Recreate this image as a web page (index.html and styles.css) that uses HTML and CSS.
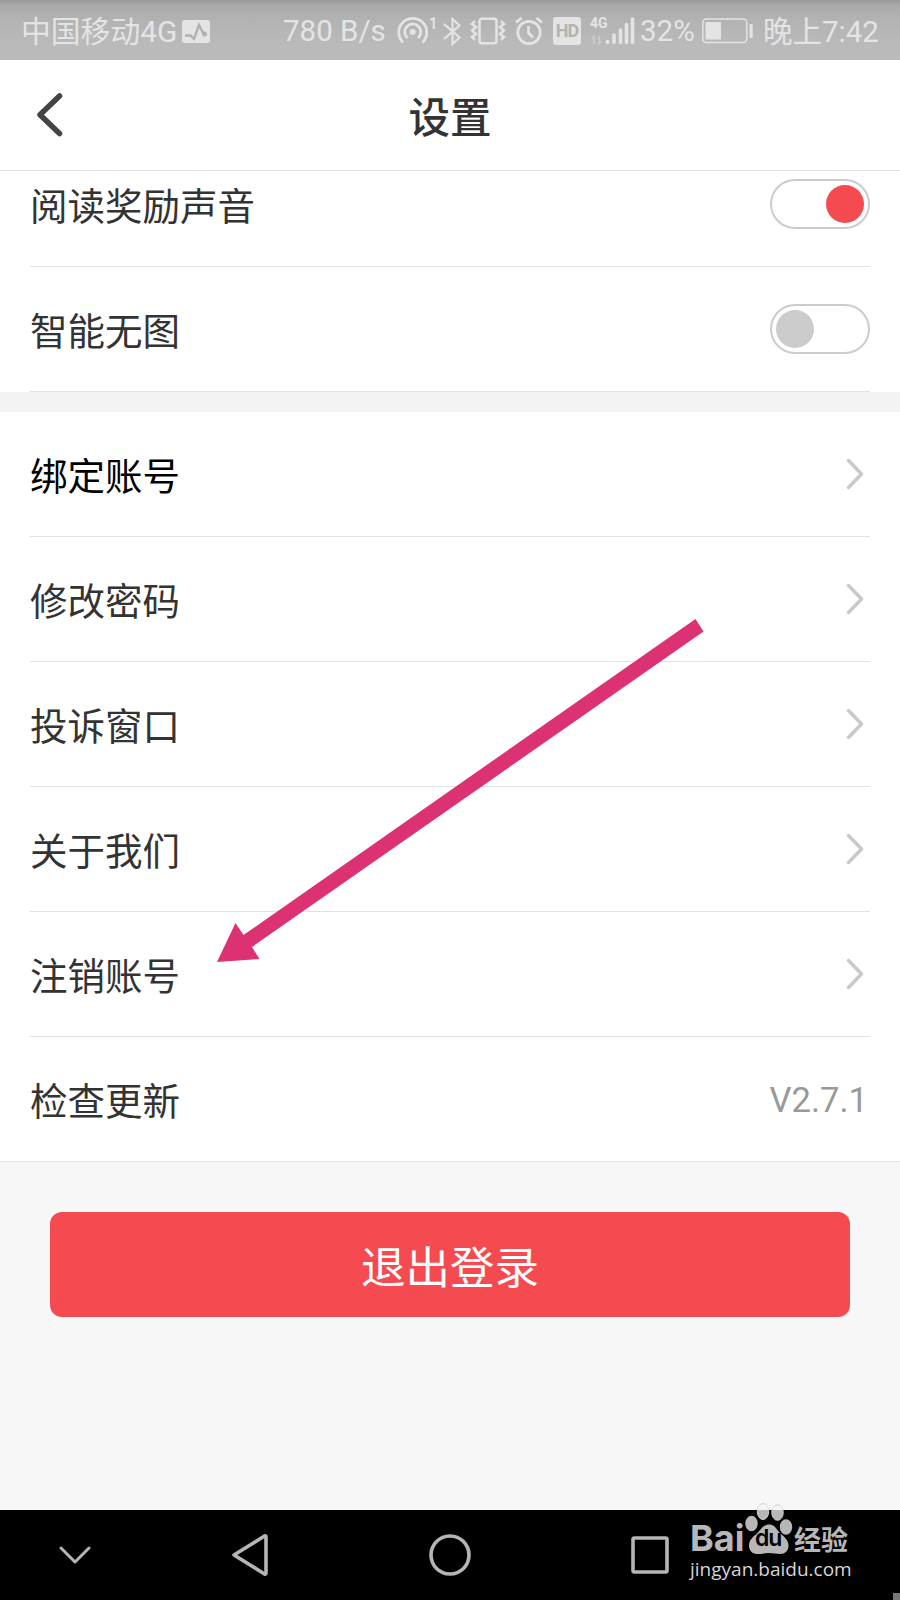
FILE: index.html
```
<!DOCTYPE html>
<html lang="zh-CN">
<head>
  <meta charset="UTF-8" />
  <meta name="viewport" content="width=device-width, initial-scale=1.0"/>
  <title>设置</title>
  <link rel="stylesheet" href="styles.css">
</head>
<body>

  <!-- Status bar -->
  <div class="status-bar">
    <div class="status-left">
      <span class="carrier">中国移动4G</span>
      <svg width="28" height="23" viewBox="0 0 28 23">
        <rect width="28" height="23" rx="3" fill="#e4e4e4"/>
        <path d="M3 15.500h5.500l3.500 3.500 5-14 4.500 9" fill="none" stroke="#b0b0b0" stroke-width="2.300"/>
        <circle cx="22.500" cy="14" r="2.500" fill="#b0b0b0"/>
      </svg>
    </div>
    <div class="status-right">
      <span class="speed">780 B/s</span>
      <svg class="hotspot" width="39" height="28" viewBox="0 0 39 28">
        <g fill="none" stroke="#e4e4e4" stroke-width="2.800">
          <path d="M6 25.500a14 14 0 1 1 19.500 0"/>
          <path d="M10.500 21a8 8 0 1 1 10.500 0"/>
        </g>
        <circle cx="15.700" cy="15" r="3" fill="#e4e4e4"/>
        <path d="M33.500 2.800 36.800 1.500V12" fill="none" stroke="#e4e4e4" stroke-width="2"/>
      </svg>
      <svg class="bluetooth" width="18" height="29" viewBox="0 0 18 29">
        <path d="M1 7 16.500 20.500 9.500 27V2l7 6.500L1 22" fill="none" stroke="#e4e4e4" stroke-width="2.200"/>
      </svg>
      <svg class="vibrate" width="36" height="28" viewBox="0 0 36 28">
        <g fill="none" stroke="#e4e4e4" stroke-width="2.500">
          <rect x="9.500" y="1.700" width="17" height="24.600" rx="2.500"/>
          <path d="m5 4-3 3 4 3-4 3.500 4 3.500-4 3 3 3"/>
          <path d="m31 4 3 3-4 3 4 3.500-4 3.500 4 3-3 3"/>
        </g>
      </svg>
      <svg class="alarm" width="28" height="28" viewBox="0 0 28 28">
        <g fill="none" stroke="#e4e4e4" stroke-width="2.800">
          <circle cx="14" cy="15.500" r="11.200"/>
          <path d="M13.500 9v7l4.500 4.500M1 5.500l5.500-4.500M27 5.500l-5.500-4.500"/>
        </g>
      </svg>
      <span class="hd">HD</span>
      <span class="network">4G</span>
      <svg class="signal" width="46" height="28" viewBox="0 0 46 28">
        <path d="M4 27v-8l-2 3M9 19v8l2-3" fill="none" stroke="#c9c9c9" stroke-width="2"/>
        <path d="M17.500 24.500v1M24 18v7.500M30.500 13v12.500M36.500 7.500v18M42.500 2v23.500" fill="none" stroke="#e4e4e4" stroke-width="3.600" stroke-linecap="round"/>
      </svg>
      <span class="percent">32%</span>
      <svg class="battery" width="51" height="26" viewBox="0 0 51 26">
        <rect x=".8" y="1" width="44" height="23.500" rx="3.500" fill="none" stroke="#e4e4e4" stroke-width="1.500"/>
        <path d="M3.500 4h15.500v17.500h-15.500z" fill="#e4e4e4"/>
        <rect x="47.500" y="6" width="3.200" height="14" rx="1" fill="#e4e4e4"/>
      </svg>
      <span class="clock">晚上7:42</span>
    </div>
  </div>

  <header>
    <svg class="back" width="26" height="44" viewBox="0 0 26 44">
      <path d="M22.500 3 3 21.700 22.500 40.500" fill="none" stroke="#444" stroke-width="5.500" stroke-linecap="round" stroke-linejoin="round"/>
    </svg>
    <h1>设置</h1>
  </header>

  <main>
    <section class="list switches">
      <div class="row"><span class="label">阅读奖励声音</span><i class="switch on"></i></div>
      <div class="row"><span class="label">智能无图</span><i class="switch"></i></div>
    </section>

    <section class="list account">
      <div class="row dark"><span class="label">绑定账号</span><svg class="chevron" viewBox="0 0 18 32"><path d="m2.500 2.500 13 13.500-13 13.500"/></svg></div>
      <div class="row"><span class="label">修改密码</span><svg class="chevron" viewBox="0 0 18 32"><path d="m2.500 2.500 13 13.500-13 13.500"/></svg></div>
      <div class="row"><span class="label">投诉窗口</span><svg class="chevron" viewBox="0 0 18 32"><path d="m2.500 2.500 13 13.500-13 13.500"/></svg></div>
      <div class="row"><span class="label">关于我们</span><svg class="chevron" viewBox="0 0 18 32"><path d="m2.500 2.500 13 13.500-13 13.500"/></svg></div>
      <div class="row"><span class="label">注销账号</span><svg class="chevron" viewBox="0 0 18 32"><path d="m2.500 2.500 13 13.500-13 13.500"/></svg></div>
      <div class="row"><span class="label">检查更新</span><span class="version">V2.7.1</span></div>
    </section>

    <button class="logout">退出登录</button>
  </main>

  <!-- System navigation -->
  <nav>
    <svg class="nav-down" width="32" height="18" viewBox="0 0 32 18"><path d="m2 2 14 14L30 2"/></svg>
    <svg class="nav-back" width="36" height="42" viewBox="0 0 36 42"><path d="M32.500 2 2 21l30.500 19q1.500.5 1.500-1V3q0-1.500-1.500-1z"/></svg>
    <svg class="nav-home" width="42" height="42" viewBox="0 0 42 42"><circle cx="21" cy="21" r="19"/></svg>
    <svg class="nav-recent" width="38" height="38" viewBox="0 0 38 38"><rect x="2" y="2" width="34" height="34" rx="1.500"/></svg>
    <div class="watermark">
      <div class="brand">
        <span class="bai">Bai</span>
        <span class="paw">
          <svg width="48" height="52" viewBox="0 0 48 52" fill="#b7b7b7">
            <ellipse cx="6.500" cy="20.500" rx="6.200" ry="7.800"/>
            <g stroke="#d4d4d4">
              <ellipse cx="18" cy="8.500" rx="5.700" ry="8"/>
              <ellipse cx="32.500" cy="9.500" rx="5.700" ry="7.800"/>
            </g>
            <path d="M12.800 7a5.200 6 0 0 1 10.400 0zM27.500 7a5 4.800 0 0 1 10 0z" fill="#f6f6f6"/>
            <ellipse cx="41" cy="24" rx="6.200" ry="7.800"/>
            <path d="M24 21.500c-6 0-8 5-12 9-5 4-8 7-8 12 0 6 4 8.500 9 8.500 4 0 7-1 11-1s7 1 11 1c5 0 8.500-3 8.500-8.500 0-5-3.500-8-8-12-4-4-5.500-9-11.500-9z"/>
          </svg>
          <b>du</b>
        </span>
        <span class="jingyan">经验</span>
      </div>
      <div class="site">jingyan.baidu.com</div>
    </div>
    <i class="corner"></i>
  </nav>

  <!-- Pointer drawn over the list -->
  <svg class="arrow" width="490" height="346" viewBox="0 0 490 346">
    <path d="M0 344 18.500 305l8 12L478.500 1l8 12.500L35 329l7.500 12z" fill="#dc3274"/>
  </svg>

</body>
</html>
```
FILE: styles.css
```
* {
  box-sizing: border-box;
}
body {
  margin: 0;
  width: 900px;
  height: 1600px;
  display: flex;
  flex-direction: column;
  position: relative;
  overflow: hidden;
  background: #f7f7f7;
  color: #333;
  font-family: Roboto, "Noto Sans CJK SC", sans-serif;
}
svg {
  display: block;
  flex: none;
}
.status-bar {
  height: 60px;
  flex: none;
  padding: 2px 20px 0 21px;
  background: linear-gradient(#999, #a9a9a9 5px, #b3b3b3 20px, #bababa 45px, #bababa);
  color: #e4e4e4;
  display: flex;
  justify-content: space-between;
  align-items: center;
  font-size: 29.5px;
  white-space: nowrap;
}
.status-left, .status-right {
  display: flex;
  align-items: center;
}
.status-left {
  gap: 5px;
}
.carrier {
  padding-bottom: 4px;
  font-size: 29.8px;
}
.speed {
  width: 114px;
}
.bluetooth {
  margin-left: 7px;
}
.vibrate {
  margin-left: 9px;
}
.alarm {
  margin-left: 9px;
}
.hd {
  width: 28px;
  height: 28px;
  margin-left: 10px;
  border-radius: 3px;
  background: #e4e4e4;
  color: #b3b3b3;
  font-size: 18px;
  font-weight: bold;
  line-height: 28px;
  text-align: center;
  letter-spacing: -1px;
}
.network {
  width: 16px;
  margin: 0 -16px 16px 9px;
  font-size: 14px;
  line-height: 14px;
  font-weight: bold;
}
.percent {
  width: 62px;
  margin-left: 4px;
}
.clock {
  width: 117px;
  margin-left: 10px;
  padding-bottom: 4px;
}
header {
  height: 111px;
  flex: none;
  display: flex;
  align-items: center;
  background: #fff;
  border-bottom: 1px solid #e0e0e0;
}
.back {
  margin-left: 37px;
}
h1 {
  flex: 1;
  margin: 0 63px 0 0;
  text-align: center;
  font-size: 41.5px;
  font-weight: 500;
}
main {
  flex: 1;
  overflow: hidden;
}
.list {
  background: #fff;
  padding: 0 30px;
}
.switches {
  margin-top: -29px;
}
.account {
  border-top: 20px solid #f3f3f3;
  border-bottom: 1px solid #e6e6e6;
}
.row {
  height: 125px;
  display: flex;
  align-items: center;
  justify-content: space-between;
  border-bottom: 1px solid #e2e2e2;
  font-size: 37.5px;
}
.account .row:last-child {
  height: 124px;
  border-bottom: none;
}
.label {
  padding-bottom: 2px;
}
.dark {
  color: #000;
}
.switch {
  width: 100px;
  height: 50px;
  padding: 4px;
  border: 2px solid #ccc;
  border-radius: 25px;
  display: flex;
}
.switch::before {
  content: "";
  width: 38px;
  height: 38px;
  border-radius: 50%;
  background: #ccc;
}
.switch.on {
  justify-content: flex-end;
}
.switch.on::before {
  background: #f54b50;
}
.chevron {
  width: 18px;
  height: 32px;
  margin-right: 6px;
  fill: none;
  stroke: #c9c9cb;
  stroke-width: 3.5;
  stroke-linecap: round;
  stroke-linejoin: round;
}
.version {
  margin-right: 2px;
  padding-top: 2px;
  color: #999;
  font-size: 34.6px;
}
.logout {
  display: block;
  width: 800px;
  height: 105px;
  margin: 50px auto 0;
  border: none;
  border-radius: 12px;
  background: #f54b50;
  color: #fff;
  font: 44.5px Roboto, "Noto Sans CJK SC", sans-serif;
}
nav {
  height: 90px;
  flex: none;
  background: #000;
  display: flex;
  align-items: center;
}
nav > svg {
  fill: none;
  stroke: #b5b5b5;
  stroke-width: 3.6;
  stroke-linecap: round;
  stroke-linejoin: round;
}
nav > .nav-down {
  margin-left: 59px;
  stroke-width: 3;
}
.nav-back {
  margin-left: 141px;
}
.nav-home {
  margin-left: 161px;
}
.nav-recent {
  margin-left: 160px;
}
.watermark {
  width: 170px;
  height: 96px;
  margin: -8px 0 0 21px;
  color: #b7b7b7;
}
.brand {
  height: 52px;
  display: flex;
  align-items: flex-end;
}
.bai {
  width: 55px;
  font: bold 36px/34px Inter, sans-serif;
}
.paw {
  position: relative;
}
.paw b {
  position: absolute;
  left: 10px;
  top: 22px;
  color: #000;
  font: 600 23px/26px Inter, sans-serif;
  letter-spacing: -1px;
}
.jingyan {
  margin-left: 1px;
  font-size: 27px;
  line-height: 27px;
  font-weight: bold;
}
.site {
  padding-top: 2px;
  font: 19px/24px "Open Sans", sans-serif;
  color: #d6d6d6;
}
.corner {
  width: 7px;
  height: 7px;
  margin-left: auto;
  align-self: flex-end;
  background: #777;
}
.arrow {
  position: absolute;
  left: 217px;
  top: 618px;
}
```
